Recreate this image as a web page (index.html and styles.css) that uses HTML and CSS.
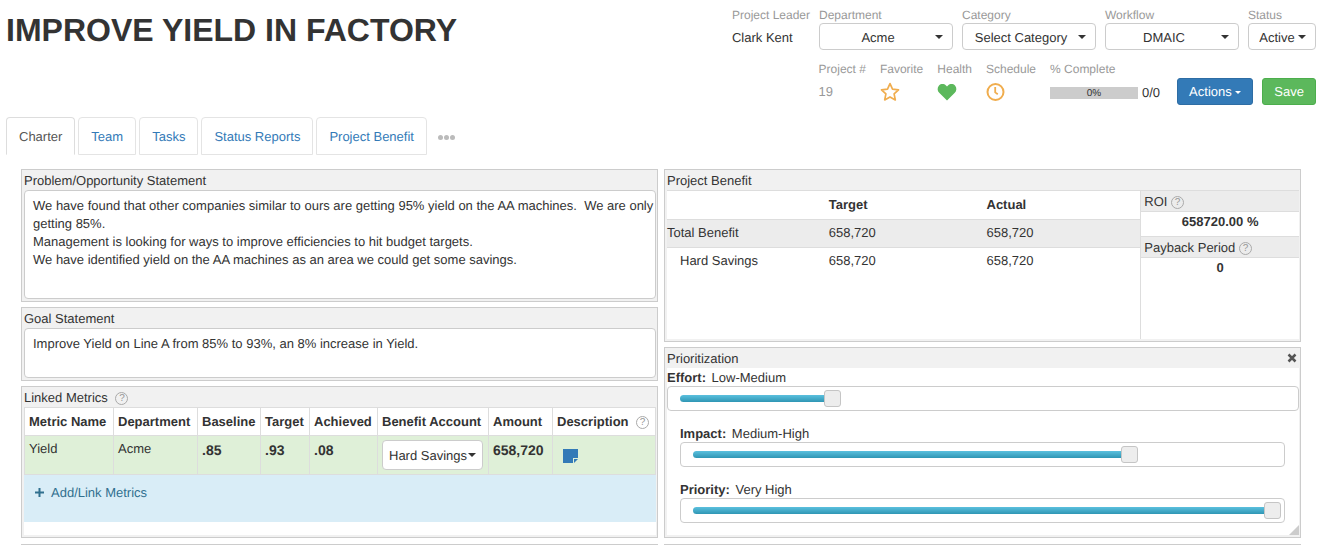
FILE: index.html
```html
<!DOCTYPE html>
<html lang="en">
<head>
    <meta charset="UTF-8">
    <meta name="viewport" content="width=device-width, initial-scale=1.0">
    <title>Improve Yield in Factory</title>
    <link rel="stylesheet" href="styles.css">
</head>
<body>
    <header class="header">
        <h1>IMPROVE YIELD IN FACTORY</h1>
        <div class="project-info">
            <div class="info-row">
                <div class="field">
                    <span class="label">Project Leader</span>
                    <span class="leader">Clark Kent</span>
                </div>
                <div class="field wide">
                    <label class="label" for="department">Department</label>
                    <div class="dropdown">
                        <select id="department"><option>Acme</option></select>
                    </div>
                </div>
                <div class="field wide">
                    <label class="label" for="category">Category</label>
                    <div class="dropdown">
                        <select id="category"><option>Select Category</option></select>
                    </div>
                </div>
                <div class="field wide">
                    <label class="label" for="workflow">Workflow</label>
                    <div class="dropdown">
                        <select id="workflow"><option>DMAIC</option></select>
                    </div>
                </div>
                <div class="field narrow">
                    <label class="label" for="status">Status</label>
                    <div class="dropdown">
                        <select id="status"><option>Active</option></select>
                    </div>
                </div>
            </div>
            <div class="info-row second">
                <div class="field">
                    <span class="label">Project #</span>
                    <span class="number">19</span>
                </div>
                <div class="field">
                    <span class="label">Favorite</span>
                    <svg class="icon" viewBox="0 0 20 20"><path d="M10 1.6l2.5 5.5 6 .7-4.4 4.1 1.2 6-5.3-3-5.3 3 1.2-6L1.500 7.800l6-.7z" fill="none" stroke="#f0ad4e" stroke-width="1.700" stroke-linejoin="round"/></svg>
                </div>
                <div class="field">
                    <span class="label">Health</span>
                    <svg class="icon" viewBox="0 0 20 20"><path d="M10 18.500L2.200 10.800C.2 8.800.1 5.400 2 3.400c2-2 5-1.900 7 0l1 1 1-1c2-1.900 5-2 7 0 1.900 2 1.800 5.400-.2 7.400z" fill="#5cb85c"/></svg>
                </div>
                <div class="field">
                    <span class="label">Schedule</span>
                    <svg class="icon" viewBox="0 0 20 20"><circle cx="9.500" cy="10" r="8" fill="none" stroke="#f0ad4e" stroke-width="2"/><path d="M9.200 5v5.400l2.600 1.800" fill="none" stroke="#f0ad4e" stroke-width="1.800"/></svg>
                </div>
                <div class="field complete">
                    <span class="label">% Complete</span>
                    <div class="progress-line">
                        <div class="progress">0%</div>
                        <span>0/0</span>
                    </div>
                </div>
                <button class="btn btn-primary" type="button">Actions <span class="caret"></span></button>
                <button class="btn btn-success" type="button">Save</button>
            </div>
        </div>
    </header>

    <nav class="tabs">
        <a class="active" href="#charter">Charter</a>
        <a href="#team">Team</a>
        <a href="#tasks">Tasks</a>
        <a href="#reports">Status Reports</a>
        <a href="#benefit">Project Benefit</a>
        <button class="more" type="button" aria-label="More tabs"><i></i><i></i><i></i></button>
    </nav>

    <main class="board" id="charter">
        <div class="column">
            <section class="panel">
                <label class="panel-title" for="problem">Problem/Opportunity Statement</label>
                <textarea id="problem" class="problem">We have found that other companies similar to ours are getting 95% yield on the AA machines.&nbsp; We are only getting 85%.
Management is looking for ways to improve efficiencies to hit budget targets.
We have identified yield on the AA machines as an area we could get some savings.</textarea>
            </section>

            <section class="panel">
                <label class="panel-title" for="goal">Goal Statement</label>
                <textarea id="goal" class="goal">Improve Yield on Line A from 85% to 93%, an 8% increase in Yield.</textarea>
            </section>

            <section class="panel grow">
                <h2 class="panel-title">Linked Metrics <span class="help spaced">?</span></h2>
                <div class="panel-body">
                    <table class="metrics">
                        <thead>
                            <tr>
                                <th class="col-name">Metric Name</th>
                                <th class="col-department">Department</th>
                                <th class="col-baseline">Baseline</th>
                                <th class="col-target">Target</th>
                                <th class="col-achieved">Achieved</th>
                                <th class="col-account">Benefit Account</th>
                                <th class="col-amount">Amount</th>
                                <th>Description <span class="help spaced">?</span></th>
                            </tr>
                        </thead>
                        <tbody>
                            <tr>
                                <td>Yield</td>
                                <td>Acme</td>
                                <td class="value">.85</td>
                                <td class="value">.93</td>
                                <td class="value">.08</td>
                                <td>
                                    <div class="dropdown account">
                                        <select aria-label="Benefit Account"><option>Hard Savings</option></select>
                                    </div>
                                </td>
                                <td class="value">658,720</td>
                                <td class="note-cell">
                                    <svg class="note" viewBox="0 0 15 14"><path d="M0 0h15v9h-5v5H0z" fill="#337ab7"/><path d="M11 14v-4h4z" fill="#337ab7"/></svg>
                                </td>
                            </tr>
                        </tbody>
                    </table>
                    <div class="add-row">
                        <a href="#add"><svg class="plus" viewBox="0 0 9 9"><path d="M4.500 0v9M0 4.500h9" stroke="#31708f" stroke-width="2"/></svg>Add/Link Metrics</a>
                    </div>
                </div>
            </section>
        </div>

        <div class="column">
            <section class="panel">
                <h2 class="panel-title">Project Benefit</h2>
                <div class="panel-body benefit">
                    <div class="benefit-main">
                        <table class="benefit-table">
                            <thead>
                                <tr><th></th><th>Target</th><th>Actual</th></tr>
                            </thead>
                            <tbody>
                                <tr class="total"><td>Total Benefit</td><td>658,720</td><td>658,720</td></tr>
                                <tr class="child"><td>Hard Savings</td><td>658,720</td><td>658,720</td></tr>
                            </tbody>
                        </table>
                    </div>
                    <dl class="benefit-side">
                        <dt>ROI <span class="help">?</span></dt>
                        <dd>658720.00 %</dd>
                        <dt>Payback Period <span class="help">?</span></dt>
                        <dd>0</dd>
                    </dl>
                </div>
            </section>

            <section class="panel grow">
                <div class="panel-title with-close">
                    <h2>Prioritization</h2>
                    <button class="close" type="button" aria-label="Close"><svg viewBox="0 0 10 10"><path d="M1.500 1.500l7 7M8.500 1.500l-7 7" stroke="#555" stroke-width="2.500"/></svg></button>
                </div>
                <div class="panel-body priorities">
                    <div class="slider-group">
                        <label for="effort"><b>Effort:</b> Low-Medium</label>
                        <div class="slider"><input type="range" id="effort" value="24" style="--value: 24%"></div>
                    </div>
                    <div class="slider-group indent">
                        <label for="impact"><b>Impact:</b> Medium-High</label>
                        <div class="slider"><input type="range" id="impact" value="75" style="--value: 75%"></div>
                    </div>
                    <div class="slider-group indent">
                        <label for="priority"><b>Priority:</b> Very High</label>
                        <div class="slider"><input type="range" id="priority" value="100" style="--value: 100%"></div>
                    </div>
                    <span class="resize"></span>
                </div>
            </section>
        </div>

        <div class="next-panel"></div>
        <div class="next-panel"></div>
    </main>
</body>
</html>
```

FILE: styles.css
```css
* {
    box-sizing: border-box;
}
body {
    margin: 0;
    font-family: "Liberation Sans", Arial, sans-serif;
    font-size: 13px;
    line-height: 18px;
    text-rendering: geometricPrecision;
    color: #333;
    background-color: #fff;
}
h1, h2, dl, dd {
    margin: 0;
}
h2 {
    font-size: 13px;
    font-weight: normal;
}
a {
    color: #337ab7;
    text-decoration: none;
}
button, select, textarea {
    font: inherit;
    color: inherit;
    text-rendering: inherit;
}

/* header */
.header {
    display: flex;
    justify-content: space-between;
    padding: 7px 10px 0 6px;
}
h1 {
    font-size: 32px;
    line-height: 46px;
    white-space: nowrap;
}
.project-info {
    display: flex;
    flex-direction: column;
    align-items: flex-end;
    gap: 8px;
}
.info-row {
    display: flex;
    gap: 9px;
}
.info-row.second {
    gap: 14px;
    align-items: flex-end;
}
.field {
    display: flex;
    flex-direction: column;
}
.label {
    font-size: 12px;
    line-height: 16px;
    color: #999;
}
.wide {
    width: 134px;
}
.narrow {
    width: 68px;
}
.leader {
    line-height: 30px;
}
.number {
    height: 28px;
    line-height: 30px;
    color: #999;
}
.dropdown {
    display: grid;
    align-items: center;
}
.dropdown select, .dropdown::after {
    grid-area: 1 / 1;
}
.dropdown select {
    appearance: none;
    width: 100%;
    height: 27px;
    padding: 2px 26px 0 10px;
    border: 1px solid #ccc;
    border-radius: 4px;
    background-color: #fff;
    text-align-last: center;
    cursor: pointer;
}
.dropdown::after {
    content: "";
    justify-self: end;
    margin-right: 10px;
    border: 4px solid transparent;
    border-top-color: #333;
    border-bottom: 0;
    pointer-events: none;
}
.narrow .dropdown select {
    padding: 2px 20px 0 10px;
}
.icon {
    width: 20px;
    height: 20px;
    margin: 5px 0 3px;
}
.complete {
    margin-right: 3px;
}
.progress-line {
    display: flex;
    align-items: center;
    gap: 4px;
    height: 28px;
    padding-top: 3px;
}
.progress {
    width: 88px;
    height: 12px;
    background-color: #ccc;
    font-size: 10px;
    line-height: 13px;
    text-align: center;
}
.btn {
    height: 27px;
    padding: 1px 11px 0;
    border: 1px solid;
    border-radius: 3px;
    color: #fff;
    cursor: pointer;
}
.btn-primary {
    background-color: #337ab7;
    border-color: #2e6da4;
    margin-right: -5px;
}
.btn-success {
    background-color: #5cb85c;
    border-color: #4cae4c;
}
.caret {
    display: inline-block;
    border: 3px solid transparent;
    border-top-color: #fff;
    border-bottom: 0;
    vertical-align: middle;
}

/* tabs */
.tabs {
    display: flex;
    gap: 3px;
    padding: 12px 6px 0;
}
.tabs a {
    padding: 10px 12px 8px;
    border: 1px solid #e4e4e4;
    border-radius: 4px 4px 0 0;
}
.tabs a.active {
    color: #555;
    border-color: #ddd;
    border-bottom-color: transparent;
}
.more {
    display: flex;
    align-items: center;
    gap: 1px;
    padding: 3px 8px 0;
    border: 0;
    background: none;
}
.more i {
    width: 5px;
    height: 5px;
    border-radius: 50%;
    background-color: #bbb;
}

/* panels */
.board {
    display: grid;
    grid-template-columns: 1fr 1fr;
    gap: 6px;
    padding: 14px 25px 0 21px;
}
.column {
    display: flex;
    flex-direction: column;
    gap: 5px;
    min-width: 0;
}
.panel {
    display: flex;
    flex-direction: column;
    padding: 0 1px 2px 2px;
    border: 1px solid #ccc;
    background-color: #f1f1f1;
}
.grow {
    flex: 1;
}
.panel-title {
    height: 20px;
    line-height: 22px;
}
.panel-body {
    flex: 1;
    background-color: #fff;
}
textarea {
    display: block;
    width: 100%;
    padding: 6px 0 6px 8px;
    border: 1px solid #ccc;
    border-radius: 4px;
    resize: none;
    overflow: hidden;
}
.problem {
    height: 109px;
}
.goal {
    height: 50px;
}
.next-panel {
    height: 1px;
    background-color: #ccc;
}
.help {
    display: inline-block;
    width: 13px;
    height: 13px;
    border: 1px solid #aaa;
    border-radius: 50%;
    color: #999;
    font-size: 10px;
    font-weight: normal;
    line-height: 11px;
    text-align: center;
    vertical-align: 1px;
}
.help.spaced {
    margin-left: 4px;
}

/* linked metrics */
table {
    width: 100%;
    border-collapse: collapse;
}
th {
    text-align: left;
}
.metrics th, .metrics td {
    padding: 4px;
    border: 1px solid #ddd;
    vertical-align: top;
    white-space: nowrap;
}
.metrics th {
    padding: 5px 4px;
    line-height: 17px;
}
.metrics tbody td {
    background-color: #dff0d8;
}
.metrics .value {
    font-size: 14px;
    font-weight: bold;
    line-height: 20px;
}
.col-name {
    width: 89px;
}
.col-department {
    width: 84px;
}
.col-baseline {
    width: 63px;
}
.col-target {
    width: 49px;
}
.col-achieved {
    width: 68px;
}
.col-account {
    width: 111px;
}
.col-amount {
    width: 64px;
}
.account {
    width: 101px;
}
.account select {
    height: 30px;
    padding: 1px 6px 0;
    text-align-last: left;
}
.account::after {
    margin-right: 7px;
}
.metrics .note-cell {
    padding: 13px 10px 0;
}
.note {
    display: block;
    width: 15px;
    height: 14px;
}
.add-row {
    height: 47px;
    margin-bottom: 13px;
    padding: 9px 11px;
    background-color: #d9edf7;
}
.add-row a {
    color: #31708f;
}
.plus {
    width: 9px;
    height: 9px;
    margin-right: 7px;
}

/* project benefit */
.benefit {
    display: flex;
    min-height: 149px;
    border-top: 1px solid #ddd;
}
.benefit-main {
    flex: 3;
}
.benefit-side {
    flex: 1;
    border-left: 1px solid #ddd;
}
.benefit-table {
    table-layout: fixed;
}
.benefit-table th, .benefit-table td {
    height: 28px;
    padding: 0 4px;
}
.benefit-table td:first-child {
    padding-left: 0;
}
.benefit-table .child td:first-child {
    padding-left: 13px;
}
.total {
    background-color: #ececec;
    border: solid #ddd;
    border-width: 1px 0;
}
.benefit-side dt {
    padding: 2px 3px 0;
    border-bottom: 1px solid #ddd;
    background-color: #ececec;
}
.benefit-side dd {
    height: 24px;
    padding-top: 1px;
    font-weight: bold;
    text-align: center;
}
.benefit-side dd + dt {
    border-top: 1px solid #ddd;
}

/* prioritization */
.with-close {
    display: flex;
    justify-content: space-between;
    align-items: flex-start;
}
.close {
    padding: 5px 2px 0;
    border: 0;
    background: none;
    cursor: pointer;
}
.close svg {
    display: block;
    width: 10px;
    height: 10px;
}
.priorities {
    position: relative;
    display: flex;
    flex-direction: column;
    gap: 13px;
}
.slider-group label {
    display: block;
    height: 18px;
    line-height: 20px;
}
.slider-group b {
    margin-right: 2px;
}
.indent {
    padding: 0 14px 0 13px;
}
.slider {
    display: flex;
    align-items: center;
    height: 25px;
    padding: 0 3px 0 12px;
    border: 1px solid #ccc;
    border-radius: 4px;
}
input[type="range"] {
    appearance: none;
    width: 100%;
    height: 17px;
    margin: 0;
    background: none;
}
input[type="range"]::-webkit-slider-runnable-track {
    height: 7px;
    border-radius: 4px;
    background: linear-gradient(#5bc0de, #2f96b4) no-repeat 0 0 / var(--value) 100%;
}
input[type="range"]::-webkit-slider-thumb {
    appearance: none;
    width: 17px;
    height: 17px;
    margin-top: -5px;
    border: 1px solid #c5c5c5;
    border-radius: 3px;
    background-color: #ededed;
}
.resize {
    position: absolute;
    right: 0;
    bottom: 0;
    border: 5px solid #ccc;
    border-top-color: transparent;
    border-left-color: transparent;
}
```
